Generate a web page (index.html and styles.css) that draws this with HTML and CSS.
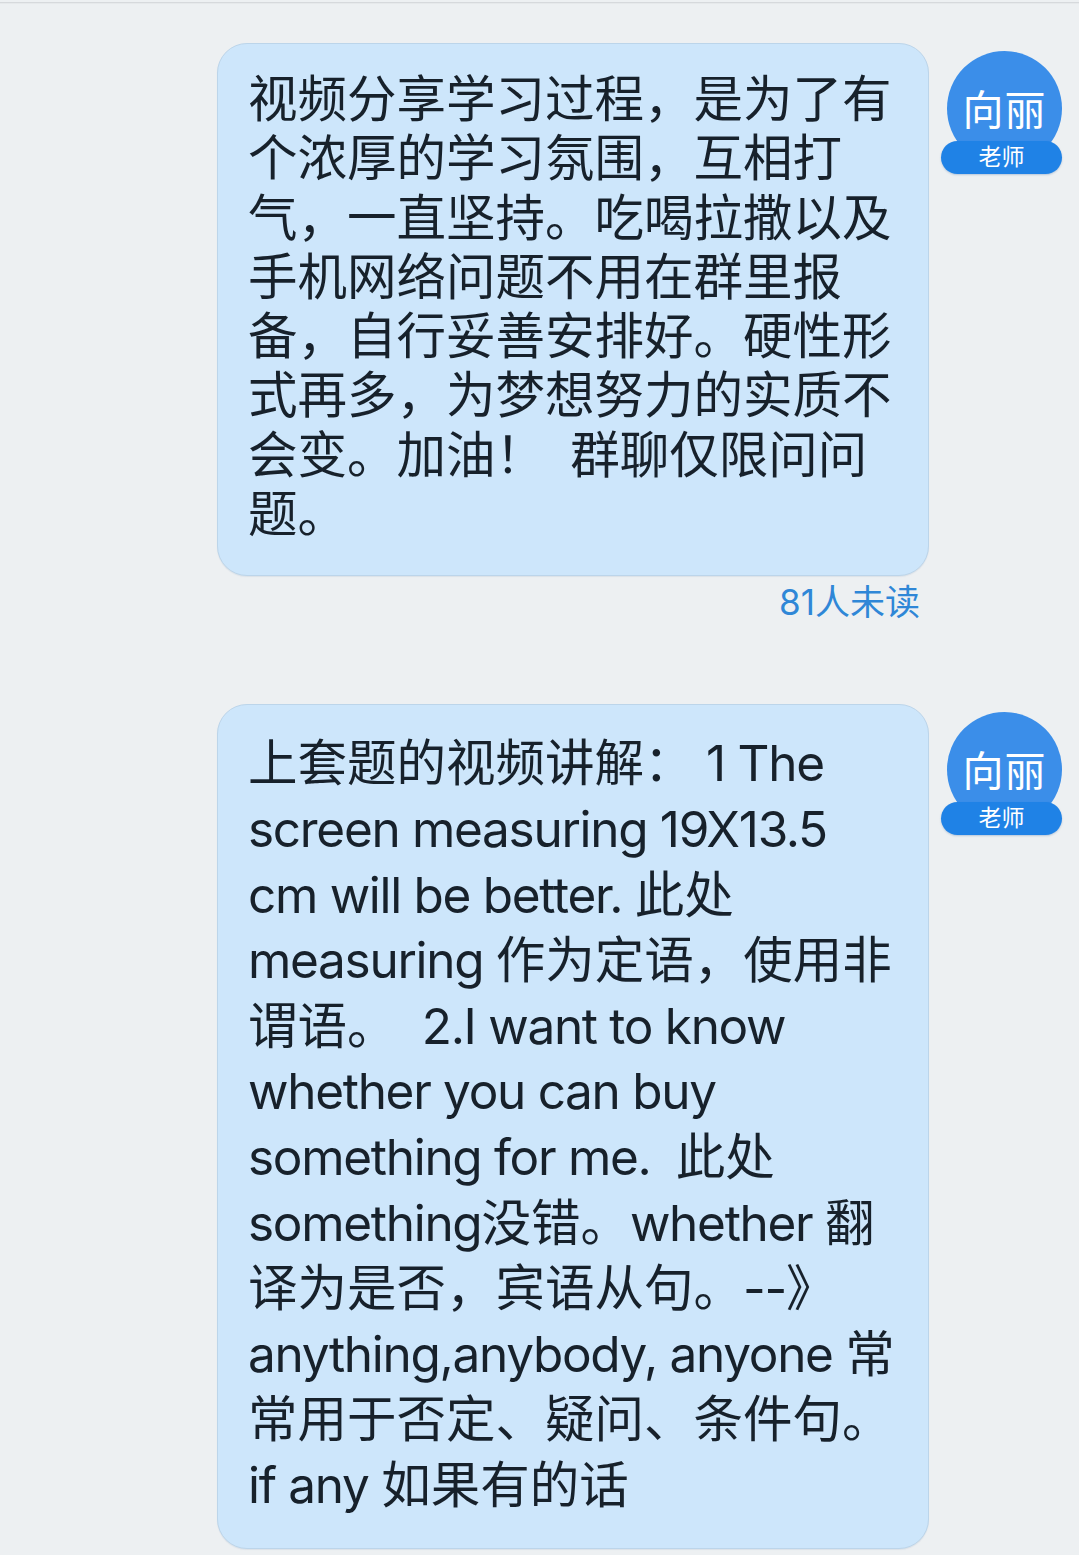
FILE: index.html
```html
<!DOCTYPE html>
<html lang="zh-CN">
<head>
<meta charset="utf-8">
<title>群聊</title>
<link rel="stylesheet" href="styles.css">
</head>
<body>
<div class="topline"></div>
<main class="chat">
  <section class="msg">
    <div class="msg-body">
      <div class="bubble bubble-cjk">
        <p class="text">视频分享学习过程，是为了有<br>个浓厚的学习氛围，互相打<br>气，一直坚持。吃喝拉撒以及<br>手机网络问题不用在群里报<br>备，自行妥善安排好。硬性形<br>式再多，为梦想努力的实质不<br>会变。加油！<span class="en">&nbsp; </span>群聊仅限问问<br>题。</p>
      </div>
      <div class="read">81人未读</div>
    </div>
    <div class="avatar">
      <div class="avatar-circle">向丽</div>
      <div class="avatar-tag">老师</div>
    </div>
  </section>

  <section class="msg msg-second">
    <div class="msg-body">
      <div class="bubble bubble-mixed">
        <p class="text">上套题的视频讲解：<span class="en">&nbsp;1 The</span><br><span class="en">screen measuring 19X13.5</span><br><span class="en">cm will be better. </span>此处<br><span class="en">measuring </span>作为定语，使用非<br>谓语。<span class="en">&nbsp; 2.I want to know</span><br><span class="en">whether you can buy</span><br><span class="en">something for me.&nbsp; </span>此处<br><span class="en">something</span>没错。<span class="en">whether </span>翻<br>译为是否，宾语从句。<span class="en">--</span>》<br><span class="en">anything,anybody, anyone </span>常<br>常用于否定、疑问、条件句。<br><span class="en">if any </span>如果有的话</p>
      </div>
    </div>
    <div class="avatar">
      <div class="avatar-circle">向丽</div>
      <div class="avatar-tag">老师</div>
    </div>
  </section>
</main>
</body>
</html>
```

FILE: styles.css
```css
html, body {
  margin: 0;
  padding: 0;
}

body {
  background: #edf0f2;
  width: 1079px;
  height: 1555px;
  overflow: hidden;
  font-family: "Inter", "Noto Sans CJK SC", sans-serif;
  color: #17212b;
}

.topline {
  margin-top: 2px;
  height: 1px;
  background: #d6d9dc;
  border-bottom: 1px solid #e6e9eb;
}

.chat {
  display: flex;
  flex-direction: column;
  padding: 39px 17px 0 0;
}

.msg {
  display: flex;
  justify-content: flex-end;
  align-items: flex-start;
  gap: 12px;
}

.msg-second {
  margin-top: 82px;
}

.msg-body {
  display: flex;
  flex-direction: column;
  align-items: flex-end;
}

.bubble {
  width: 712px;
  box-sizing: border-box;
  background: #cde6fb;
  border: 1px solid #bcd5ea;
  border-radius: 30px;
  box-shadow: 0 1px 1px rgba(120, 150, 180, 0.15);
}

.bubble-cjk {
  padding: 26px 20px 31px 30px;
}

.bubble-mixed {
  padding: 26px 20px 29px 30px;
}

.text {
  margin: 0;
  font-size: 49.5px;
  white-space: nowrap;
}

.en {
  letter-spacing: -1.3px;
}

.bubble-cjk .text {
  line-height: 59.3px;
}

.bubble-mixed .text {
  line-height: 65.6px;
}

.read {
  margin-top: 6px;
  margin-right: 9px;
  font-size: 35px;
  line-height: 40px;
  color: #2f87d7;
}

.avatar {
  width: 121px;
  margin-top: 8px;
  display: flex;
  flex-direction: column;
  align-items: center;
}

.avatar-circle {
  width: 115px;
  height: 115px;
  margin-left: 6px;
  box-sizing: border-box;
  padding-top: 4px;
  border-radius: 50%;
  background: #3b8ee9;
  color: #ffffff;
  font-size: 41px;
  line-height: 111px;
  text-align: center;
  letter-spacing: 1px;
}

.avatar-tag {
  width: 121px;
  height: 33px;
  margin-top: -25px;
  border-radius: 17px;
  background: #1f82e6;
  color: #ffffff;
  font-size: 23px;
  line-height: 33px;
  text-align: center;
  box-shadow: 0 1px 2px rgba(20, 80, 150, 0.25);
}
```
